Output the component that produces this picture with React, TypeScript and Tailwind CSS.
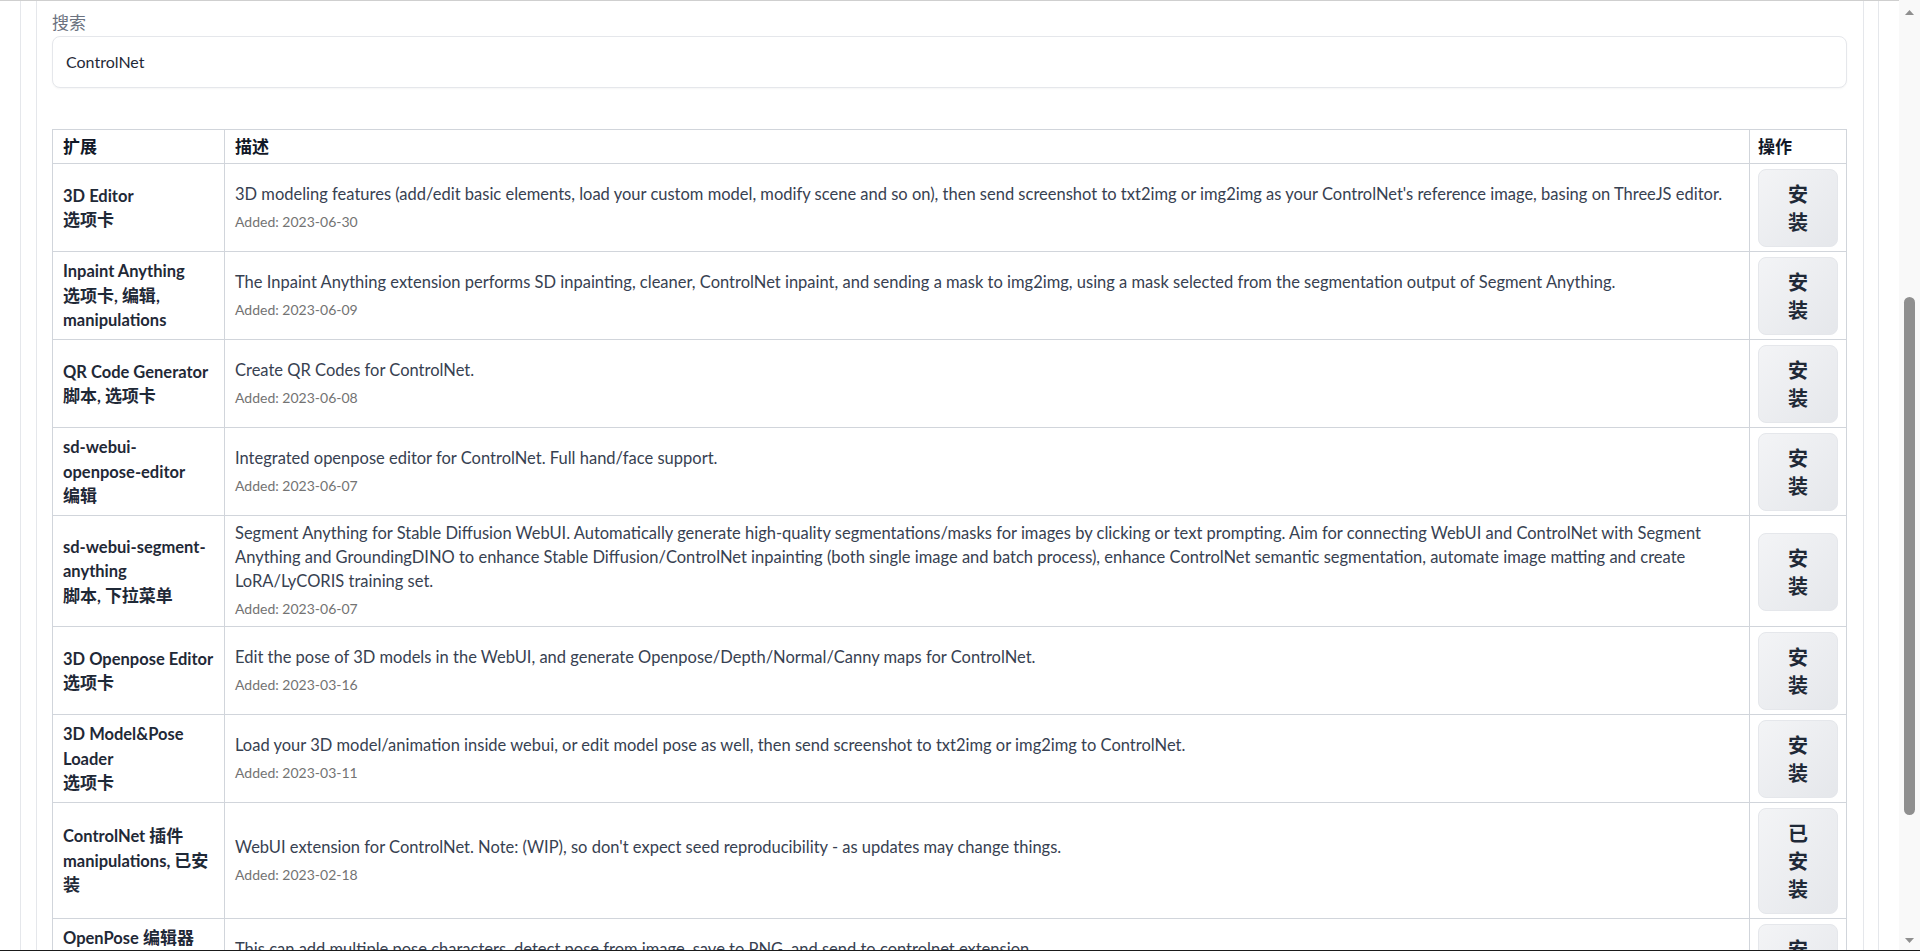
import { ReactNode } from "react";

interface Extension {
  lines: string[];
  desc: string[];
  date: string;
  installed?: boolean;
}

const extensions: Extension[] = [
  {
    lines: ["3D Editor", "选项卡"],
    desc: [
      "3D modeling features (add/edit basic elements, load your custom model, modify scene and so on), then send screenshot to txt2img or img2img as your ControlNet's reference image, basing on ThreeJS editor.",
    ],
    date: "2023-06-30",
  },
  {
    lines: ["Inpaint Anything", "选项卡, 编辑,", "manipulations"],
    desc: [
      "The Inpaint Anything extension performs SD inpainting, cleaner, ControlNet inpaint, and sending a mask to img2img, using a mask selected from the segmentation output of Segment Anything.",
    ],
    date: "2023-06-09",
  },
  {
    lines: ["QR Code Generator", "脚本, 选项卡"],
    desc: ["Create QR Codes for ControlNet."],
    date: "2023-06-08",
  },
  {
    lines: ["sd-webui-", "openpose-editor", "编辑"],
    desc: ["Integrated openpose editor for ControlNet. Full hand/face support."],
    date: "2023-06-07",
  },
  {
    lines: ["sd-webui-segment-", "anything", "脚本, 下拉菜单"],
    desc: [
      "Segment Anything for Stable Diffusion WebUI. Automatically generate high-quality segmentations/masks for images by clicking or text prompting. Aim for connecting WebUI and ControlNet with Segment",
      "Anything and GroundingDINO to enhance Stable Diffusion/ControlNet inpainting (both single image and batch process), enhance ControlNet semantic segmentation, automate image matting and create",
      "LoRA/LyCORIS training set.",
    ],
    date: "2023-06-07",
  },
  {
    lines: ["3D Openpose Editor", "选项卡"],
    desc: [
      "Edit the pose of 3D models in the WebUI, and generate Openpose/Depth/Normal/Canny maps for ControlNet.",
    ],
    date: "2023-03-16",
  },
  {
    lines: ["3D Model&Pose", "Loader", "选项卡"],
    desc: [
      "Load your 3D model/animation inside webui, or edit model pose as well, then send screenshot to txt2img or img2img to ControlNet.",
    ],
    date: "2023-03-11",
  },
  {
    lines: ["ControlNet 插件", "manipulations, 已安", "装"],
    desc: [
      "WebUI extension for ControlNet. Note: (WIP), so don't expect seed reproducibility - as updates may change things.",
    ],
    date: "2023-02-18",
    installed: true,
  },
  {
    lines: ["OpenPose 编辑器", "选项卡, 编辑,", "manipulations"],
    desc: [
      "This can add multiple pose characters, detect pose from image, save to PNG, and send to controlnet extension.",
    ],
    date: "2023-02-12",
  },
];

const CJK = /([\u2E80-\u9FFF\u3000-\u303F\uFF00-\uFFEF]+)/;

// wrap CJK runs so they get the bigger size the reference uses
function Mixed({ text }: { text: string }) {
  const parts = text.split(CJK);
  return (
    <>
      {parts.map((p, i) =>
        i % 2 === 1 ? (
          <span key={i} className="text-[17px]">
            {p}
          </span>
        ) : (
          p
        )
      )}
    </>
  );
}

function InstallButton({ installed }: { installed?: boolean }) {
  const chars = (installed ? "已安装" : "安装").split("");
  return (
    <button className="flex w-full flex-col items-center rounded-lg border border-[#e5e7eb] bg-linear-to-br from-[#f3f4f6] to-[#e5e7eb] py-[10px] text-[20px] font-bold leading-[28px] text-[#1f2937]">
      {chars.map((c, i) => (
        <span key={i}>{c}</span>
      ))}
    </button>
  );
}

function Scrollbar() {
  return (
    <div className="flex h-full w-[21px] shrink-0 flex-col items-center bg-[#f9f9f9]">
      <div className="flex h-[24px] items-center justify-center">
        <svg width="9" height="5" viewBox="0 0 9 5">
          <polygon points="4.5,0 9,5 0,5" fill="#8f8f8f" />
        </svg>
      </div>
      <div className="h-[273px]" />
      <div className="h-[518px] w-[11px] rounded-full bg-[#8f8f8f]" />
      <div className="flex-1" />
      <div className="flex h-[20px] items-center justify-center">
        <svg width="9" height="5" viewBox="0 0 9 5">
          <polygon points="0,0 9,0 4.5,5" fill="#8f8f8f" />
        </svg>
      </div>
    </div>
  );
}

function Cell({ children, className }: { children: ReactNode; className: string }) {
  return <td className={"border border-[#d1d5db] align-middle " + className}>{children}</td>;
}

export default function App() {
  return (
    <div
      className="flex h-[951px] w-[1920px] flex-col overflow-hidden bg-white"
      style={{ fontFamily: 'Lato, "Noto Sans CJK SC", sans-serif' }}
    >
      <div className="flex min-h-0 flex-1">
        <main className="min-w-0 flex-1 overflow-hidden border-t border-[#cfcfcf]">
          <div className="mx-[20px] h-full border-x border-[#e5e7eb]">
            <div className="ml-[15px] mr-[14px] h-full border-x border-[#e5e7eb] pl-[15px] pr-[16px] pt-[12px]">
              {/* Search */}
              <div className="mb-[3px] text-[17px] leading-[20px] text-[#6b7280]">搜索</div>
              <div className="flex h-[52px] items-center rounded-lg border border-[#e5e7eb] bg-white px-[13px] text-[16px] text-[#1f2937] shadow-[0_1px_2px_rgba(0,0,0,0.04)]">
                ControlNet
              </div>

              {/* Extensions table */}
              <table className="mt-[41px] w-full table-fixed border-collapse">
                <colgroup>
                  <col className="w-[172px]" />
                  <col />
                  <col className="w-[97px]" />
                </colgroup>
                <thead>
                  <tr className="text-left text-[17px] font-bold leading-[25px] text-[#111827]">
                    <th className="border border-[#d1d5db] px-[10px] py-[4px]">扩展</th>
                    <th className="border border-[#d1d5db] px-[10px] py-[4px]">描述</th>
                    <th className="border border-[#d1d5db] px-[8px] py-[4px]">操作</th>
                  </tr>
                </thead>
                <tbody>
                  {extensions.map((ext, idx) => (
                    <tr key={idx}>
                      <Cell className="px-[10px] pb-[4px] pt-[5px]">
                        <div className="whitespace-nowrap text-[16.5px] font-bold leading-[24.5px] text-[#1f2937]">
                          {ext.lines.map((l, i) => (
                            <div key={i}>
                              <Mixed text={l} />
                            </div>
                          ))}
                        </div>
                      </Cell>
                      <Cell className="px-[10px] pb-[4px] pt-[5px]">
                        <div className="whitespace-nowrap text-[16.5px] leading-[24px] text-[#374151]">
                          {ext.desc.map((d, i) => (
                            <div key={i}>{d}</div>
                          ))}
                        </div>
                        <div className="mt-[3px] text-[14px] leading-[26px] text-[#737373]">
                          Added: {ext.date}
                        </div>
                      </Cell>
                      <Cell className="px-[8px] pb-[4px] pt-[5px]">
                        <InstallButton installed={ext.installed} />
                      </Cell>
                    </tr>
                  ))}
                </tbody>
              </table>
            </div>
          </div>
        </main>
        <Scrollbar />
      </div>
      <div className="h-px bg-[#1a1a1a]" />
    </div>
  );
}
